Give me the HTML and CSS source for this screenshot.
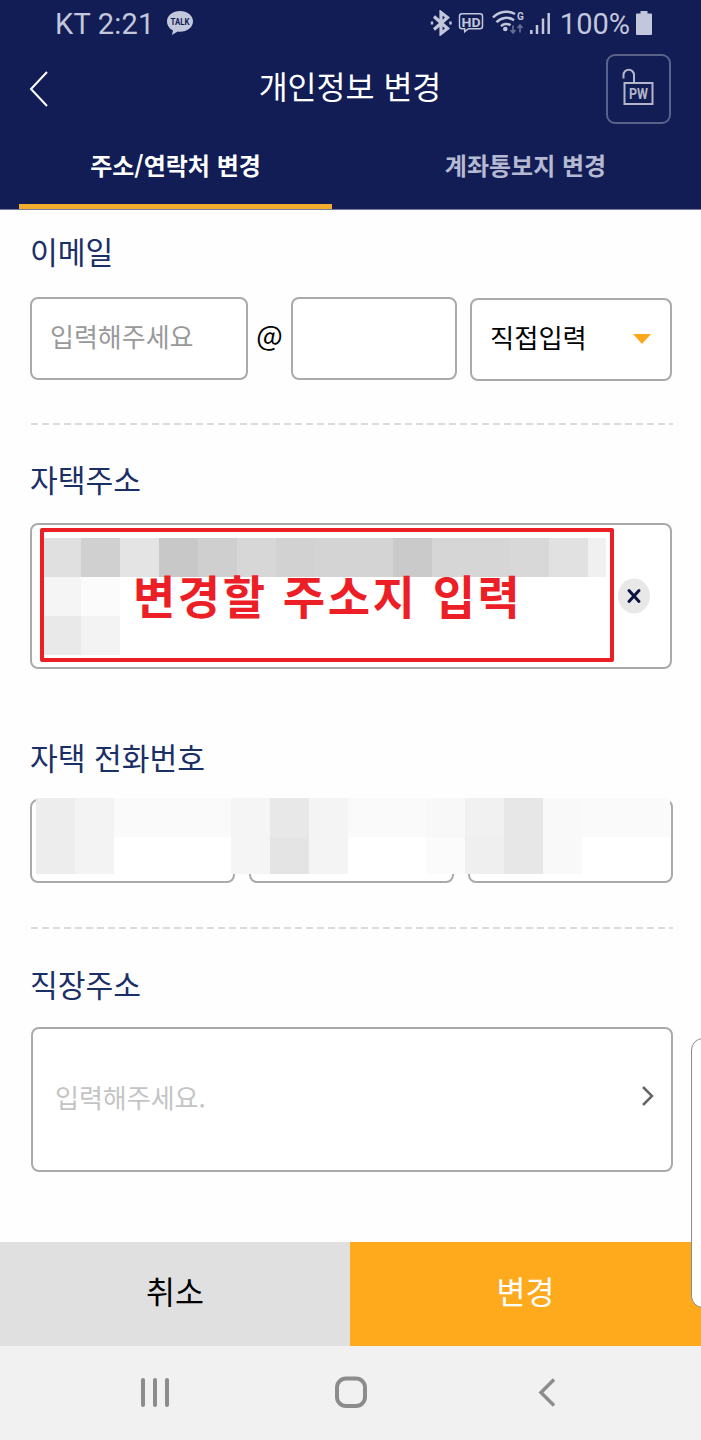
FILE: index.html
```html
<!DOCTYPE html>
<html lang="ko">

<head>
    <meta charset="UTF-8">
    <meta name="viewport" content="width=device-width, initial-scale=1.0">
    <title>개인정보 변경</title>
    <link rel="stylesheet" href="styles.css">
</head>

<body>
    <header>
        <div class="status-bar">
            <span class="carrier">KT 2:21</span>
            <svg class="talk" width="26" height="25" viewBox="0 0 26 25">
                <path d="M13 0C5.800 0 0 4.700 0 10.400c0 3.900 2.500 7.200 6 9L4.900 24l5.800-3.500c.8.100 1.500.2 2.300.2 7.200 0 13-4.600 13-10.300S20.200 0 13 0z" fill="#c3c7dc" />
                <text x="13" y="14" text-anchor="middle" textLength="19" lengthAdjust="spacingAndGlyphs" class="talk-text">TALK</text>
            </svg>
            <div class="status-icons">
                <svg width="124" height="26" viewBox="430 10 124 26" fill="none" stroke="#c3c7dc">
                    <path d="M434 16.500l13.500 12-6.500 5V12.500l6.500 5-13.500 12" stroke-width="3.200" />
                    <path d="M432 21.500v3M450.500 21.500v3" stroke-width="2.400" />
                    <path d="M462 13.700h18a2.500 2.500 0 0 1 2.500 2.500v10a2.500 2.500 0 0 1-2.500 2.500h-11.500l-3.800 3v-3H462a2.500 2.500 0 0 1-2.500-2.500v-10a2.500 2.500 0 0 1 2.500-2.500z" stroke-width="1.500" />
                    <text x="471" y="26.800" text-anchor="middle" textLength="19" lengthAdjust="spacingAndGlyphs" class="hd-text">HD</text>
                    <path d="M493 17.500a18 18 0 0 1 22-3.500M496.500 22.300a13 13 0 0 1 17.500-2M501 26.300a7 7 0 0 1 9.500-1" stroke-width="2.500" />
                    <circle cx="505.300" cy="29" r="2.300" fill="#c3c7dc" stroke="none" />
                    <text x="517" y="19.500" class="wifi-text">G</text>
                    <path d="M513 25.500v7M510.500 30l2.500 3 2.500-3M520 32.500v-7M517.500 28l2.500-3 2.500 3" stroke="#666d94" stroke-width="1.700" />
                    <path d="M531.300 34v-4M537 34v-9M543 34V18.500M548.700 34V13" stroke-width="2.500" />
                </svg>
                <span class="percent">100%</span>
                <svg width="16" height="24" viewBox="0 0 16 24">
                    <path d="M4.500 0h7v2.500H15a1 1 0 0 1 1 1V23a1 1 0 0 1-1 1H1a1 1 0 0 1-1-1V3.500a1 1 0 0 1 1-1h3.500z" fill="#c3c7dc" />
                </svg>
            </div>
        </div>
        <div class="title-bar">
            <a class="back">
                <svg width="20" height="36" viewBox="0 0 20 36" fill="none" stroke="#fff" stroke-width="2">
                    <path d="M18 1L2 18l16 17" />
                </svg>
            </a>
            <h1>개인정보 변경</h1>
            <a class="lock">
                <svg width="32" height="38" viewBox="0 0 32 38" fill="none" stroke="#b3b6ca" stroke-width="2">
                    <path d="M1.500 10.500V7a5.200 5.200 0 0 1 10.500 0V15" />
                    <rect x="2.500" y="15" width="28" height="21" />
                    <text x="16.500" y="30.500" text-anchor="middle" textLength="19" lengthAdjust="spacingAndGlyphs" class="lock-text">PW</text>
                </svg>
            </a>
        </div>
        <nav class="tabs">
            <a class="tab active">주소/연락처 변경</a>
            <a class="tab">계좌통보지 변경</a>
        </nav>
    </header>

    <main>
        <section class="email">
            <h2>이메일</h2>
            <div class="email-row">
                <input class="email-id" type="text" placeholder="입력해주세요">
                <span class="at">@</span>
                <input class="email-host" type="text">
                <div class="select">
                    <span>직접입력</span>
                    <i class="arrow"></i>
                </div>
            </div>
        </section>
        <div class="divider"></div>

        <section class="home-address">
            <h2>자택주소</h2>
            <div class="address-box">
                <button class="clear">
                    <svg width="32" height="36" viewBox="0 0 32 36">
                        <ellipse cx="16" cy="18" rx="16" ry="17.500" fill="#e8e8e9" />
                        <path d="M11 12.500l10 11M21 12.500l-10 11" stroke="#0d1442" stroke-width="3" stroke-linecap="round" />
                    </svg>
                </button>
                <div class="guide">
                    <svg class="mosaic" width="562" height="117" shape-rendering="crispEdges">
                        <rect x="0" y="0" width="37" height="39" fill="#e0e0e0" />
                        <rect x="37" y="0" width="39" height="39" fill="#d0d0d0" />
                        <rect x="76" y="0" width="39" height="39" fill="#e4e4e4" />
                        <rect x="115" y="0" width="39" height="39" fill="#c8c8c8" />
                        <rect x="154" y="0" width="39" height="39" fill="#cfcfcf" />
                        <rect x="193" y="0" width="39" height="39" fill="#d7d7d7" />
                        <rect x="232" y="0" width="39" height="39" fill="#d2d2d2" />
                        <rect x="271" y="0" width="78" height="39" fill="#d4d4d4" />
                        <rect x="349" y="0" width="39" height="39" fill="#cacaca" />
                        <rect x="388" y="0" width="78" height="39" fill="#d6d6d6" />
                        <rect x="466" y="0" width="39" height="39" fill="#d8d8d8" />
                        <rect x="505" y="0" width="39" height="39" fill="#e1e1e1" />
                        <rect x="544" y="0" width="18" height="39" fill="#f0f0f0" />
                        <rect x="0" y="39" width="37" height="39" fill="#f5f5f5" />
                        <rect x="37" y="39" width="39" height="39" fill="#fbfbfb" />
                        <rect x="0" y="78" width="37" height="39" fill="#e9e9e9" />
                        <rect x="37" y="78" width="39" height="39" fill="#f3f3f3" />
                    </svg>
                    <span class="guide-text">변경할 주소지 입력</span>
                </div>
            </div>
        </section>

        <section class="home-phone">
            <h2>자택 전화번호</h2>
            <div class="phone-row">
                <input type="tel">
                <input type="tel">
                <input type="tel">
                <svg class="mosaic" width="634" height="76" shape-rendering="crispEdges">
                    <rect width="634" height="76" fill="#fff" />
                    <rect width="634" height="39" fill="#fafafa" />
                    <rect x="0" width="39" height="76" fill="#ededed" />
                    <rect x="39" width="39" height="76" fill="#f3f3f3" />
                    <rect x="195" width="39" height="76" fill="#f5f5f5" />
                    <rect x="234" width="39" height="39" fill="#e8e8e8" />
                    <rect x="234" y="39" width="39" height="37" fill="#e4e4e4" />
                    <rect x="273" width="39" height="76" fill="#f4f4f4" />
                    <rect x="390" width="39" height="39" fill="#f8f8f8" />
                    <rect x="390" y="39" width="39" height="37" fill="#fbfbfb" />
                    <rect x="429" width="39" height="39" fill="#f1f1f1" />
                    <rect x="429" y="39" width="39" height="37" fill="#efefef" />
                    <rect x="468" width="39" height="76" fill="#e7e7e7" />
                    <rect x="507" width="39" height="76" fill="#f9f9f9" />
                </svg>
            </div>
        </section>
        <div class="divider"></div>

        <section class="work-address">
            <h2>직장주소</h2>
            <div class="search-box">
                <span>입력해주세요.</span>
                <svg width="13" height="20" viewBox="0 0 13 20" fill="none" stroke="#666" stroke-width="2.500">
                    <path d="M2 1l9 9-9 9" />
                </svg>
            </div>
        </section>
    </main>

    <footer>
        <div class="actions">
            <button class="cancel">취소</button>
            <button class="submit">변경</button>
        </div>
        <div class="soft-keys">
            <svg width="30" height="30" viewBox="0 0 30 30" stroke="#8c8c8c" stroke-width="4" stroke-linecap="round">
                <path d="M3 3v25M15 3v25M27 3v25" />
            </svg>
            <svg width="32" height="32" viewBox="0 0 32 32" fill="none" stroke="#8c8c8c" stroke-width="4">
                <rect x="2" y="2.500" width="28" height="27.500" rx="9" />
            </svg>
            <svg width="20" height="30" viewBox="0 0 20 30" fill="none" stroke="#8c8c8c" stroke-width="3.500">
                <path d="M17 2.500L4 15.500l13 13" />
            </svg>
        </div>
    </footer>

    <div class="edge-panel"></div>
</body>

</html>
```
FILE: styles.css
```css
* {
    box-sizing: border-box;
    padding: 0;
    margin: 0;
    font-family: "Noto Sans CJK KR", sans-serif;
}

body {
    width: 701px;
    height: 1440px;
    background: #fefefe;
    overflow: hidden;
    position: relative;
    display: flex;
    flex-direction: column;
}

header {
    height: 210px;
    background: #111d54;
    border-bottom: 1px solid #777d99;
}

.status-bar {
    height: 46px;
    padding: 0 49px 0 55px;
    display: flex;
    align-items: center;
    color: #c3c7dc;
}

.carrier,
.percent {
    font-family: Roboto, sans-serif;
    font-size: 29px;
    line-height: 46px;
    padding-top: 2px;
}

.carrier {
    letter-spacing: 0.2px;
}

.talk {
    margin-left: 13px;
}

.talk-text {
    font: bold 9px Roboto, sans-serif;
    fill: #111d54;
}

.status-icons {
    margin-left: auto;
    display: flex;
    align-items: center;
}

.percent {
    margin: 0 6px;
}

.hd-text {
    font: bold 13px Roboto, sans-serif;
    fill: #c3c7dc;
    stroke: none;
}

.wifi-text {
    font: bold 10px Roboto, sans-serif;
    fill: #c3c7dc;
    stroke: none;
}

.title-bar {
    height: 84px;
    padding: 0 30px 0 29px;
    display: flex;
    align-items: center;
    justify-content: space-between;
}

.back {
    width: 65px;
    height: 36px;
    margin-top: 2px;
}

h1 {
    color: #fff;
    font-size: 31.5px;
    line-height: 46px;
    font-weight: 400;
    margin-bottom: 7px;
}

.lock {
    width: 65px;
    height: 70px;
    margin-top: 2px;
    border: 2px solid #5a6289;
    border-radius: 9px;
    display: flex;
    justify-content: center;
    padding-top: 12px;
}

.lock-text {
    font: bold 14px Roboto, sans-serif;
    fill: #b3b6ca;
    stroke: none;
}

.tabs {
    height: 79px;
    padding: 0 19px;
    display: flex;
    justify-content: space-between;
}

.tab {
    width: 313px;
    color: #b5b9d2;
    font-size: 24px;
    font-weight: 700;
    line-height: 70px;
    text-align: center;
    border-bottom: 5px solid transparent;
}

.tab.active {
    color: #fff;
    border-color: #f3ad2e;
}

main {
    height: 1032px;
    padding: 0 28px 0 30px;
}

h2 {
    color: #1a2f66;
    font-size: 30.2px;
    line-height: 44px;
    font-weight: 400;
}

input,
.select,
.address-box,
.search-box {
    border: 2px solid #aaa;
    border-radius: 8px;
    background: #fff;
}

.email {
    height: 213px;
    padding-top: 19px;
}

.email-row {
    margin-top: 24px;
    display: flex;
    align-items: flex-start;
}

.email-row input {
    height: 83px;
    padding: 0 18px 7px;
    font-size: 26px;
}

.email-row input::placeholder {
    color: #999;
}

.email-row .email-id {
    width: 218px;
}

.email-row .email-host {
    width: 166px;
}

.at {
    width: 43px;
    font-size: 28px;
    line-height: 75px;
    text-align: center;
}

.select {
    width: 202px;
    height: 83px;
    margin: 1px 0 0 13px;
    padding: 0 19px 6px 18px;
    display: flex;
    align-items: center;
    justify-content: space-between;
    font-size: 26.3px;
}

.arrow {
    border: 9px solid transparent;
    border-top: 10px solid #fba81f;
    border-bottom: 0;
    margin-top: 5px;
}

.divider {
    height: 2px;
    margin-left: 1px;
    background: repeating-linear-gradient(90deg, #dcdcdc 0 7px, transparent 7px 11px);
}

.home-address {
    height: 277px;
    padding-top: 32px;
}

.address-box {
    position: relative;
    width: 642px;
    height: 146px;
    margin-top: 22px;
    padding-right: 20px;
    display: flex;
    align-items: center;
    justify-content: flex-end;
}

.clear {
    height: 36px;
    border: 0;
    background: none;
}

/* 주소 입력 안내 표시 */
.guide {
    position: absolute;
    left: 8px;
    top: 3px;
    width: 574px;
    height: 134px;
    border: 4px solid #ec1e26;
    border-radius: 2px;
}

.mosaic {
    position: absolute;
    left: 0;
    top: 6px;
}

.guide-text {
    position: absolute;
    left: 89px;
    top: 28px;
    color: #ec1e26;
    font-size: 46px;
    line-height: 68px;
    font-weight: 700;
    letter-spacing: 2.5px;
    white-space: nowrap;
}

.home-phone {
    height: 225px;
    padding-top: 33px;
}

.phone-row {
    position: relative;
    width: 643px;
    margin-top: 20px;
    display: flex;
    justify-content: space-between;
}

.phone-row input {
    width: 205px;
    height: 84px;
}

.phone-row .mosaic {
    left: 6px;
    top: -1px;
}

.work-address {
    padding: 33px 0 0 1px;
}

.work-address h2 {
    margin-left: -1px;
}

.search-box {
    width: 642px;
    height: 145px;
    margin-top: 21px;
    padding: 0 17px 7px 22px;
    display: flex;
    align-items: center;
    justify-content: space-between;
    color: #c4c4c4;
    font-size: 26px;
}

.actions {
    height: 104px;
    display: flex;
}

.actions button {
    width: 350px;
    border: 0;
    padding-bottom: 9px;
    font-size: 31.5px;
    background: #e0e0e0;
}

.actions .submit {
    width: 351px;
    color: #fff;
    background: #ffaa1d;
}

.soft-keys {
    height: 94px;
    background: #f1f1f1;
    padding: 0 144px 2px 140px;
    display: grid;
    grid-template-columns: 195px 1fr 20px;
    align-items: center;
}

/* 화면 오른쪽 엣지 패널 */
.edge-panel {
    position: absolute;
    left: 691px;
    top: 1038px;
    width: 30px;
    height: 270px;
    border: 1px solid #8c8c8c;
    border-radius: 12px;
    background: #fff;
}
```
